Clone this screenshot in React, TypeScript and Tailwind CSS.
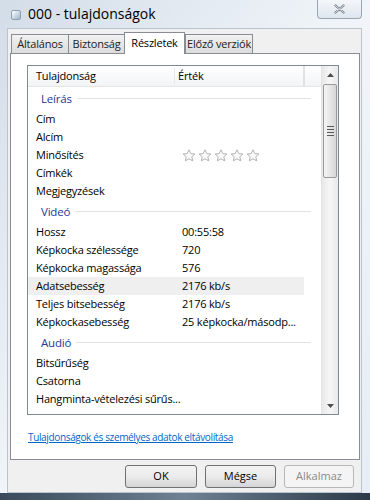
const font = { fontFamily: '"Open Sans", "Noto Sans", sans-serif' };

type Row =
  | { kind: "group"; label: string }
  | { kind: "item"; label: string; value?: string; stars?: boolean; hot?: boolean };

const rows: Row[] = [
  { kind: "group", label: "Leírás" },
  { kind: "item", label: "Cím" },
  { kind: "item", label: "Alcím" },
  { kind: "item", label: "Minősítés", stars: true },
  { kind: "item", label: "Címkék" },
  { kind: "item", label: "Megjegyzések" },
  { kind: "group", label: "Videó" },
  { kind: "item", label: "Hossz", value: "00:55:58" },
  { kind: "item", label: "Képkocka szélessége", value: "720" },
  { kind: "item", label: "Képkocka magassága", value: "576" },
  { kind: "item", label: "Adatsebesség", value: "2176 kb/s", hot: true },
  { kind: "item", label: "Teljes bitsebesség", value: "2176 kb/s" },
  { kind: "item", label: "Képkockasebesség", value: "25 képkocka/másodp..." },
  { kind: "group", label: "Audió" },
  { kind: "item", label: "Bitsűrűség" },
  { kind: "item", label: "Csatorna" },
  { kind: "item", label: "Hangminta-vételezési sűrűs..." },
  { kind: "group", label: "Média" },
];

function Star() {
  return (
    <svg width="14" height="13" viewBox="0 0 14 13">
      <path
        d="M7 0.8 L8.8 4.6 L12.9 5 L9.8 7.8 L10.7 11.9 L7 9.8 L3.3 11.9 L4.2 7.8 L1.1 5 L5.2 4.6 Z"
        fill="#fbfbfb"
        stroke="#b4b4b4"
        strokeWidth="1"
        strokeLinejoin="round"
      />
    </svg>
  );
}

function Tab({ label, active, w }: { label: string; active?: boolean; w: string }) {
  if (active) {
    return (
      <div className={`relative z-10 -mb-px flex h-[22px] ${w} items-center justify-center whitespace-nowrap border border-b-0 border-[#898c95] bg-white text-[11px] tracking-[-0.2px] text-black`}>
        {label}
      </div>
    );
  }
  return (
    <div className={`-mr-px flex h-[19px] ${w} items-center justify-center whitespace-nowrap border border-b-0 border-[#898c95] bg-gradient-to-b from-[#f2f2f2] to-[#dcdcdc] text-[11px] tracking-[-0.2px] text-[#222]`}>
      {label}
    </div>
  );
}

function Button({ label, disabled, w }: { label: string; disabled?: boolean; w: string }) {
  return (
    <div
      className={`flex h-[23px] ${w} items-center justify-center rounded-[3px] border text-[11px] ${
        disabled
          ? "border-[#b5b8bb] bg-[#f4f4f4] text-[#8a8a8a]"
          : "border-[#707070] bg-gradient-to-b from-[#f3f3f3] via-[#ebebeb] to-[#d5d5d5] text-black"
      }`}
    >
      {label}
    </div>
  );
}

export default function App() {
  return (
    <div
      className="flex h-[500px] w-[370px] flex-col overflow-hidden bg-gradient-to-br from-[#d3dde8] via-[#f1f5f9] to-[#e6edf4]"
      style={font}
    >
      {/* title bar */}
      <div className="flex h-[28px] shrink-0 items-start">
        <div className="ml-[11px] mt-[10px] h-[10px] w-[10px] rounded-[2px] border border-[#8aa0b4] bg-gradient-to-br from-[#ffffff] to-[#9fb4c8]" />
        <div className="ml-[7px] mt-[3px] text-[14px] text-black">000 - tulajdonságok</div>
        <div className="ml-auto mr-[8px] flex h-[19px] w-[45px] items-center justify-center rounded-b-[4px] border border-t-0 border-[#9aa6b2] bg-gradient-to-b from-[#f4f7fa] to-[#dfe6ee]">
          <svg width="11" height="10" viewBox="0 0 11 10">
            <path d="M1.5 1.5 L9.5 8.5 M9.5 1.5 L1.5 8.5" stroke="#6e7c8a" strokeWidth="2.2" strokeLinecap="round" />
            <path d="M1.5 1.5 L9.5 8.5 M9.5 1.5 L1.5 8.5" stroke="#f4f6f8" strokeWidth="0.8" strokeLinecap="round" />
          </svg>
        </div>
      </div>

      {/* client */}
      <div className="ml-[7px] mr-[8px] flex flex-1 flex-col border border-[#b9c4cf] bg-[#f0f0f0] pb-[4px]">
        <div className="ml-[3px] mr-[1px] mt-[3px] flex items-end">
          <Tab label="Általános" w="w-[58px]" />
          <Tab label="Biztonság" w="w-[57px]" />
          <Tab label="Részletek" w="w-[61px]" active />
          <Tab label="Előző verziók" w="w-[68px]" />
        </div>
        <div className="ml-[2px] mr-[1px] flex h-[407px] flex-col border border-[#898c95] bg-white">
          <div className="ml-[16px] mt-[11px] flex h-[350px] w-[312px] border border-[#828790]">
            {/* list */}
            <div className="flex flex-1 flex-col overflow-hidden tracking-[-0.2px]">
              <div className="flex h-[21px] shrink-0 items-center border-b border-[#e5e5e5] bg-gradient-to-b from-white to-[#f3f4f6] text-[11px] text-black">
                <div className="w-[146px] pl-[8px]">Tulajdonság</div>
                <div className="flex-1 border-l border-[#e8e8e8] pl-[3px]">Érték</div>
                <div className="h-full w-[2px] border-x border-[#e2e2e2]" />
                <div className="w-[16px]" />
              </div>
              {rows.map((r, i) =>
                r.kind === "group" ? (
                  <div key={i} className="flex h-[23px] shrink-0 items-center pl-[13px] pr-[10px]">
                    <span className="text-[11.5px] text-[#1e3a93]">{r.label}</span>
                    <div className="ml-[5px] h-px flex-1 bg-[#e2e2e2]" />
                  </div>
                ) : (
                  <div key={i} className="flex h-[18px] shrink-0 items-center text-[11px] text-black">
                    <div className={`flex h-full w-[276px] items-center ${r.hot ? "bg-[#efefef]" : ""}`}>
                      <div className="w-[146px] shrink-0 whitespace-nowrap pl-[8px]">{r.label}</div>
                      {r.stars ? (
                        <div className="flex items-center gap-[2px] pl-[8px]">
                          <Star />
                          <Star />
                          <Star />
                          <Star />
                          <Star />
                        </div>
                      ) : r.value ? (
                        <div className="flex-1 overflow-hidden whitespace-nowrap pl-[8px]">{r.value}</div>
                      ) : null}
                    </div>
                  </div>
                )
              )}
            </div>
            {/* scrollbar */}
            <div className="flex w-[17px] shrink-0 flex-col border-l border-[#e3e3e3] bg-gradient-to-r from-[#e8e8e8] via-[#f6f6f6] to-[#e8e8e8]">
              <div className="flex h-[17px] items-center justify-center">
                <svg width="7" height="4" viewBox="0 0 7 4">
                  <path d="M0 4 L3.5 0 L7 4 Z" fill="#4d4d4d" />
                </svg>
              </div>
              <div className="mx-px mt-[1px] flex h-[94px] items-center justify-center rounded-[2px] border border-[#9a9a9a] bg-gradient-to-r from-[#f4f4f4] via-[#e6e6e6] to-[#d6d6d6]">
                <div className="flex flex-col gap-[2px]">
                  <div className="h-px w-[7px] bg-[#5a5a5a]" />
                  <div className="h-px w-[7px] bg-[#5a5a5a]" />
                  <div className="h-px w-[7px] bg-[#5a5a5a]" />
                  <div className="h-px w-[7px] bg-[#5a5a5a]" />
                </div>
              </div>
              <div className="flex-1" />
              <div className="flex h-[17px] items-center justify-center">
                <svg width="7" height="4" viewBox="0 0 7 4">
                  <path d="M0 0 L3.5 4 L7 0 Z" fill="#4d4d4d" />
                </svg>
              </div>
            </div>
          </div>
          <div className="ml-[17px] mt-[15px] text-[10px] tracking-[-0.35px] text-[#0066cc] underline">
            Tulajdonságok és személyes adatok eltávolítása
          </div>
        </div>
        <div className="mr-[7px] mt-auto flex justify-end gap-[8px]">
          <Button label="OK" w="w-[72px]" />
          <Button label="Mégse" w="w-[71px]" />
          <Button label="Alkalmaz" w="w-[70px]" disabled />
        </div>
      </div>
      <div className="h-[7px] shrink-0 bg-gradient-to-r from-[#3a4a5a] via-[#6f8294] to-[#2c3a48]" />
    </div>
  );
}
